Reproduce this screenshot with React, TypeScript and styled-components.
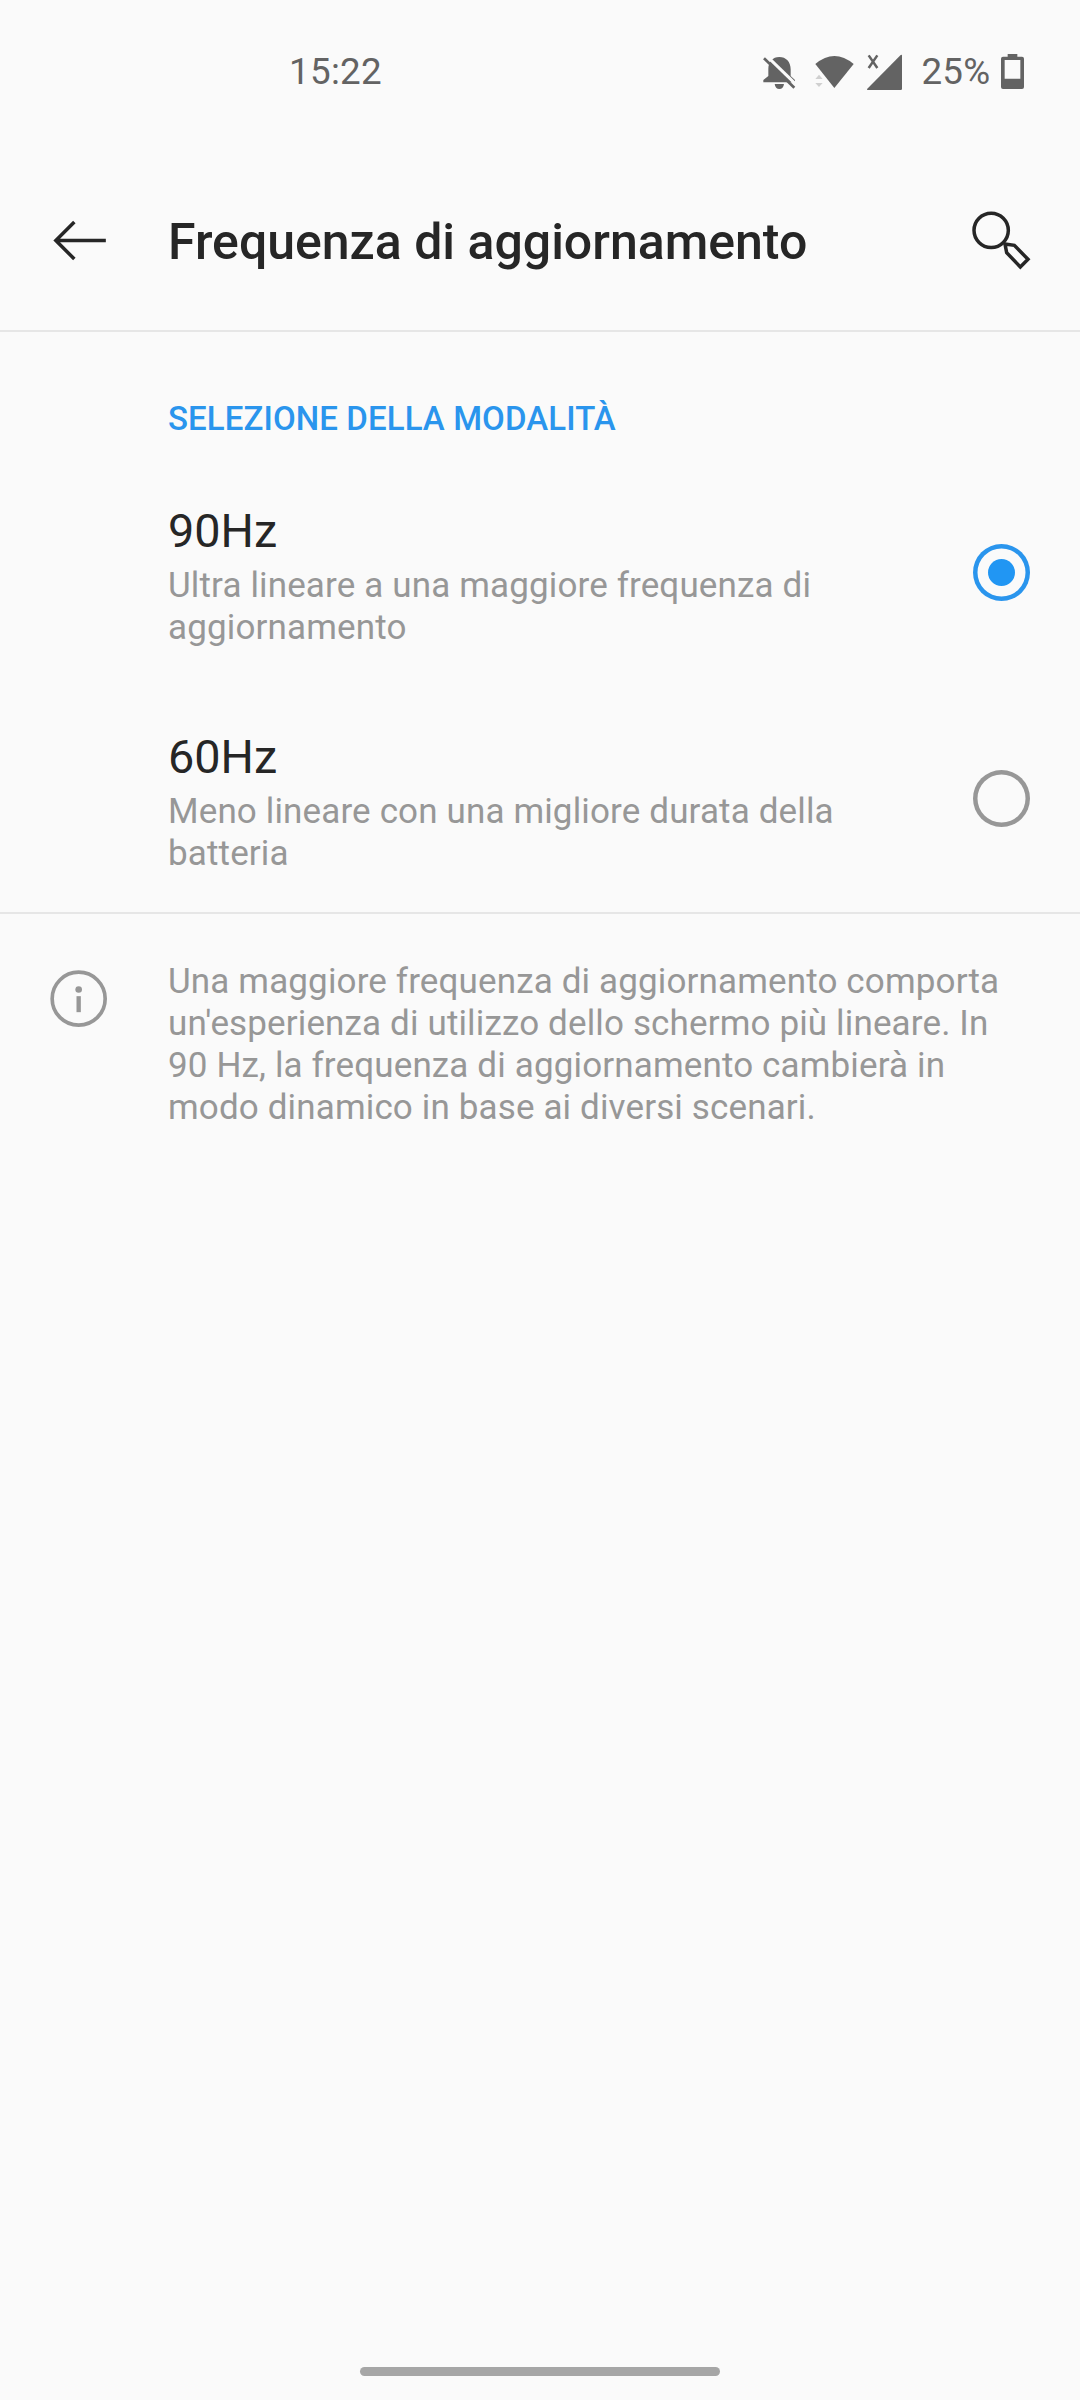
import React, { useState } from "react";
import styled, { createGlobalStyle } from "styled-components";

const GlobalStyle = createGlobalStyle`
  * { box-sizing: border-box; }
  body { margin: 0; background: #fafafa; font-family: Roboto, sans-serif; }
`;

const Screen = styled.div`
  width: 1080px;
  height: 2400px;
  display: flex;
  flex-direction: column;
  background: #fafafa;
  color: #262626;
`;

const StatusBar = styled.div`
  height: 144px;
  padding: 49px 55px 0 289px;
  display: flex;
  justify-content: space-between;
  align-items: flex-start;
  color: #636363;
  font-size: 36.75px;
  line-height: 46px;
  letter-spacing: 0.3px;
`;

const StatusIcons = styled.div`
  display: flex;
  align-items: flex-start;
`;

const BatteryLevel = styled.span`
  margin-right: 8.5px;
`;

const StatusSvg = styled.svg<{ $gap?: number }>`
  display: block;
  height: 44px;
  margin-right: ${(p) => p.$gap ?? 0}px;
`;

const Header = styled.header`
  height: 188px;
  padding: 68px 48px 0 51px;
  display: flex;
  align-items: flex-start;
  border-bottom: 2px solid #e6e6e6;
`;

const IconButton = styled.button<{ $raise?: number }>`
  border: 0;
  padding: 0;
  margin-top: ${(p) => -(p.$raise ?? 0)}px;
  background: none;
  color: inherit;
  line-height: 0;
`;

const Title = styled.h1`
  flex: 1;
  margin: 0;
  padding-left: 61px;
  font-size: 50px;
  line-height: 60px;
  font-weight: 500;
`;

const SectionTitle = styled.h2`
  height: 128px;
  margin: 0;
  padding: 67px 0 0 168px;
  color: #2a95ed;
  font-size: 33px;
  line-height: 40px;
  font-weight: 500;
  letter-spacing: 0.1px;
`;

const Option = styled.div`
  height: 226px;
  padding: 0 50px 0 168px;
  display: flex;
  align-items: center;
  justify-content: space-between;
`;

const OptionText = styled.div`
  padding-top: 5px;
`;

const OptionName = styled.div`
  font-size: 46.8px;
  line-height: 56px;
  margin-bottom: 6px;
`;

const Description = styled.p`
  margin: 0;
  color: #979797;
  font-size: 35px;
  line-height: 42px;
  letter-spacing: 0.14px;
  white-space: pre-line;
`;

const Radio = styled.span<{ $on: boolean }>`
  width: 57px;
  height: 57px;
  margin-bottom: 1px;
  border-radius: 50%;
  box-shadow: inset 0 0 0 4.5px ${(p) => (p.$on ? "#2a95ed" : "#979797")};
  display: grid;
  place-items: center;
  &::after {
    content: "";
    width: 27px;
    height: 27px;
    border-radius: 50%;
    background: ${(p) => (p.$on ? "#2196f3" : "transparent")};
  }
`;

const Info = styled.section`
  display: flex;
  align-items: flex-start;
  padding: 47px 50px 0 50px;
  border-top: 2px solid #e6e6e6;
  color: #979797;
`;

const InfoIcon = styled.svg`
  margin: 9px 61px 0 0;
  flex: none;
`;

const HomeIndicator = styled.div`
  width: 360px;
  height: 9px;
  margin: auto auto 24px;
  border-radius: 5px;
  background: #a6a6a6;
`;

const options = [
  { name: "90Hz", text: "Ultra lineare a una maggiore frequenza di\naggiornamento" },
  { name: "60Hz", text: "Meno lineare con una migliore durata della\nbatteria" },
];

export default function App() {
  const [selected, setSelected] = useState("90Hz");
  return (
    <Screen>
      <GlobalStyle />
      <StatusBar>
        <span>15:22</span>
        <StatusIcons>
          <StatusSvg width="37" viewBox="60 27 111 132" $gap={17} fill="#636363">
            <path d="M118 51C98 51 85 65 85 88V108L70 120V127H165V120L152 108V88C152 65 138 51 118 51Z" />
            <path d="M104 132H132Q130 147 118 147Q106 147 104 132Z" />
            <path d="M76 44L174 139" stroke="#fafafa" strokeWidth="9" />
            <path d="M72 55L163 143" stroke="#636363" strokeWidth="8" />
          </StatusSvg>
          <StatusSvg width="41" viewBox="222 27 123 132" $gap={11} fill="#636363">
            <path d="M226 72Q283 24 341 72L283 144Z" />
            <path d="M226 117L237 104L248 117ZM226 129H248L237 141Z" fill="#d0d0d0" />
          </StatusSvg>
          <StatusSvg width="37" viewBox="378 27 111 132" $gap={18.4} fill="#636363">
            <path d="M383 150Q379 150 382 146L482 45Q486 43 486 47V146Q486 150 482 150Z" />
            <path d="M386 46L412 84M412 46L386 84" stroke="#636363" strokeWidth="7.5" />
          </StatusSvg>
          <BatteryLevel>25%</BatteryLevel>
          <StatusSvg width="26" viewBox="777 27 78 132" fill="#636363">
            <path
              fillRule="evenodd"
              d="M803 42H832V50H846Q852 50 852 56V141Q852 147 846 147H789Q783 147 783 141V56Q783 50 789 50H803ZM794 60V116H841V60Z"
            />
          </StatusSvg>
        </StatusIcons>
      </StatusBar>

      <Header>
        <IconButton aria-label="Indietro">
          <svg width="56" height="57" viewBox="33 36 168 171" fill="none" stroke="#262626" strokeWidth="10.5">
            <path d="M48 121.500H197.500M103 66L47.500 121.500L103 177" />
          </svg>
        </IconButton>
        <Title>Frequenza di aggiornamento</Title>
        <IconButton aria-label="Cerca" $raise={4}>
          <svg width="64" height="64" viewBox="84 54 192 192" fill="none" stroke="#262626" strokeWidth="10.500">
            <circle cx="153.500" cy="121" r="51.500" />
            <path d="M195 162L223 166L264 208L241 231L200 188Z" />
          </svg>
        </IconButton>
      </Header>

      <SectionTitle>SELEZIONE DELLA MODALITÀ</SectionTitle>
      {options.map((o) => (
        <Option key={o.name} onClick={() => setSelected(o.name)}>
          <OptionText>
            <OptionName>{o.name}</OptionName>
            <Description>{o.text}</Description>
          </OptionText>
          <Radio $on={selected === o.name} />
        </Option>
      ))}

      <Info>
        <InfoIcon width="57" height="57" viewBox="59.500 89.500 171 171" fill="none" stroke="#979797">
          <circle cx="145.500" cy="175.500" r="79.500" strokeWidth="11" />
          <circle cx="145.500" cy="148" r="10" fill="#979797" stroke="none" />
          <path d="M145.500 168V216" strokeWidth="13" />
        </InfoIcon>
        <Description>
          {
            "Una maggiore frequenza di aggiornamento comporta\nun'esperienza di utilizzo dello schermo più lineare. In\n90 Hz, la frequenza di aggiornamento cambierà in\nmodo dinamico in base ai diversi scenari."
          }
        </Description>
      </Info>
      <HomeIndicator />
    </Screen>
  );
}
